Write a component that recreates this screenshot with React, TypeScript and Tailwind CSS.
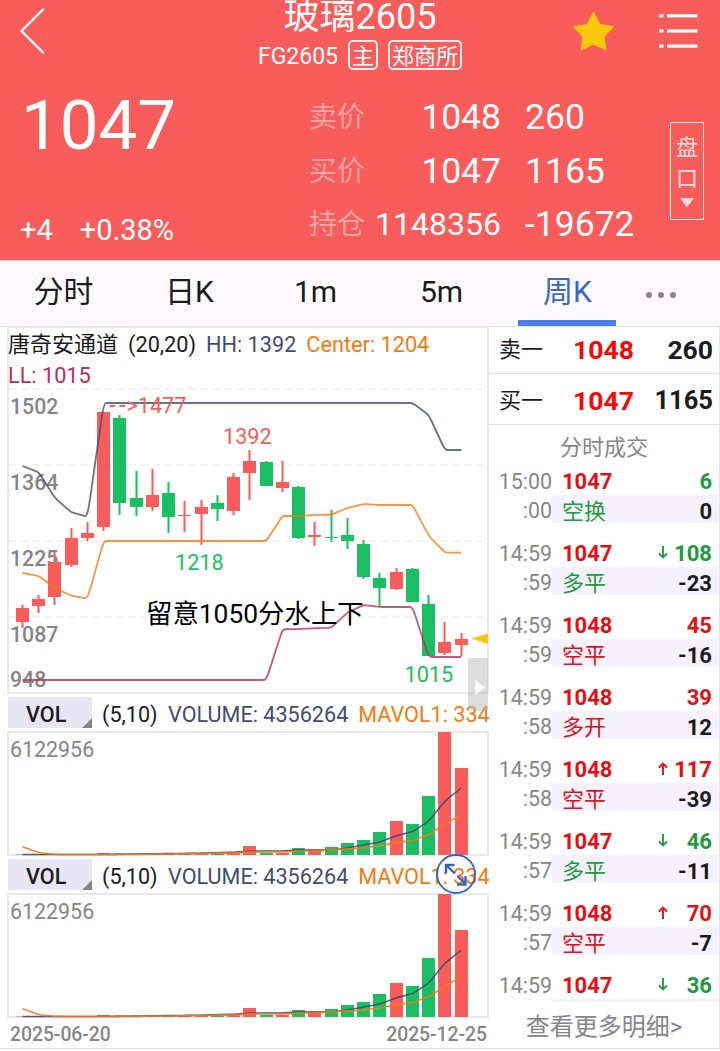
import React from 'react';

type Side = 'up' | 'down';

interface Candle {
  side: Side;
  open: number;
  close: number;
  high: number;
  low: number;
}

interface Trade {
  time: string;
  sec: string;
  price: number;
  arrow?: Side;
  volume: number;
  side: Side;
  kind: string;
  kindSide: Side;
  diff: string;
}

const RED = '#f85d5b';
const GREEN = '#1abf63';

const c = (side: Side, open: number, close: number, high: number, low: number): Candle => ({
  side,
  open,
  close,
  high,
  low,
});

const candles: Candle[] = [
  c('up', 608, 622, 605, 628),
  c('up', 599, 606, 595, 613),
  c('up', 562, 597, 551, 605),
  c('up', 538, 565, 528, 567),
  c('up', 533, 538, 522, 541),
  c('up', 412, 527, 412, 531),
  c('down', 418, 503, 415, 515),
  c('down', 498, 507, 471, 516),
  c('up', 495, 507, 469, 511),
  c('down', 493, 517, 482, 533),
  c('up', 515, 516, 501, 532),
  c('up', 507, 514, 500, 545),
  c('down', 503, 509, 495, 521),
  c('up', 477, 511, 473, 515),
  c('up', 461, 473, 450, 500),
  c('down', 462, 486, 461, 486),
  c('up', 482, 488, 461, 492),
  c('down', 487, 538, 486, 539),
  c('up', 535, 537, 522, 546),
  c('down', 537, 538, 510, 542),
  c('down', 535, 541, 518, 549),
  c('down', 544, 577, 540, 579),
  c('down', 578, 588, 573, 606),
  c('up', 572, 589, 568, 590),
  c('down', 569, 602, 568, 602),
  c('down', 604, 656, 595, 656),
  c('up', 642, 653, 622, 655),
  c('up', 639, 645, 633, 656),
];

const upper = [466, 472.3, 498, 512.3, 516.7, ...Array(20).fill(403), 415, 450, 450];
const center = [
  573, 576, 588, 595.7, 598.5, ...Array(11).fill(541), 516, 516, 515, 514.7, 508, 504, 505, 505, 505, 535.7, 552.7, 552.7,
];
const lower = [
  ...Array(16).fill(680), 629.3, 629, 628.3, 627.7, 612.7, 605, 607, 607, 607, 657, 657, 657,
];

const volumes = [
  0.5, 0.5, 0.5, 0.5, 0.5, 2, 1.5, 1, 1, 1.5, 1, 1.5, 1.5, 2, 9, 2, 2, 7, 5.5, 8, 12, 15, 23, 34, 31, 59, 123, 87,
];
const mavol1 = [
  0.5, 0.5, 0.5, 0.5, 0.5, 0.5, 0.7, 1, 1.2, 1.4, 1.6, 1.8, 2.4, 2.8, 4, 4, 4, 5, 5, 5, 7, 10, 13, 19.3, 23.3, 34, 54, 67,
];
const mavol2 = [
  8.3, 2.3, 0.7, 0.5, 0.5, 0.5, 0.5, 0.5, 1, 1, 1.3, 1.5, 1.8, 2, 3, 3, 3, 4, 4, 5, 6, 7, 9.3, 12.3, 14.3, 20.3, 31, 40,
];

const STEP = 16.25;
const cx = (i: number) => 22.5 + STEP * i;
const barLeft = (i: number) => Math.round(15.8 + STEP * i);

// Polyline with slightly rounded corners
function linePath(ys: number[]) {
  const r = 0.15;
  let d = `M${cx(0)} ${ys[0]}`;
  for (let i = 1; i < ys.length - 1; i++) {
    const ax = cx(i) - STEP * r;
    const ay = ys[i] + (ys[i - 1] - ys[i]) * r;
    const bx = cx(i) + STEP * r;
    const by = ys[i] + (ys[i + 1] - ys[i]) * r;
    d += `L${ax} ${ay}Q${cx(i)} ${ys[i]} ${bx} ${by}`;
  }
  return `${d}L${cx(ys.length - 1)} ${ys[ys.length - 1]}`;
}

const trades: Trade[] = [
  { time: '15:00', sec: ':00', price: 1047, volume: 6, side: 'down', kind: '空换', kindSide: 'down', diff: '0' },
  { time: '14:59', sec: ':59', price: 1047, arrow: 'down', volume: 108, side: 'down', kind: '多平', kindSide: 'down', diff: '-23' },
  { time: '14:59', sec: ':59', price: 1048, volume: 45, side: 'up', kind: '空平', kindSide: 'up', diff: '-16' },
  { time: '14:59', sec: ':58', price: 1048, volume: 39, side: 'up', kind: '多开', kindSide: 'up', diff: '12' },
  { time: '14:59', sec: ':58', price: 1048, arrow: 'up', volume: 117, side: 'up', kind: '空平', kindSide: 'up', diff: '-39' },
  { time: '14:59', sec: ':57', price: 1047, arrow: 'down', volume: 46, side: 'down', kind: '多平', kindSide: 'down', diff: '-11' },
  { time: '14:59', sec: ':57', price: 1048, arrow: 'up', volume: 70, side: 'up', kind: '空平', kindSide: 'up', diff: '-7' },
];

const quotes = [
  { label: '卖价', value: '1048', extra: '260', size: 'text-[35.5px]' },
  { label: '买价', value: '1047', extra: '1165', size: 'text-[35.5px]' },
  { label: '持仓', value: '1148356', extra: '-19672', size: 'text-[32px]' },
];

const tabs = ['分时', '日K', '1m', '5m', '周K'];

function Header() {
  return (
    <header className="h-[260px] bg-[#f85d5b] text-white">
      <div className="grid h-[74px] grid-cols-3">
        <svg className="ml-[18px] mt-[6px]" width="28" height="50" viewBox="0 0 28 50" fill="none">
          <path d="M25 3.5L3.5 25L25 46.5" stroke="#fff" strokeWidth="2.4" strokeLinecap="round" strokeLinejoin="round" />
        </svg>
        <div className="flex flex-col items-center">
          <h1 className="h-[40px] whitespace-nowrap text-[36px] leading-[34px]">玻璃2605</h1>
          <div className="flex h-[30px] items-center gap-[10px] whitespace-nowrap text-[23px] leading-[30px]">
            <span className="pt-[3px]">FG2605</span>
            <span className="flex h-[30px] items-center rounded-[5px] border-2 border-white/90 px-[2px] pt-[3px] text-[22px]">主</span>
            <span className="flex h-[30px] items-center rounded-[5px] border-2 border-white/90 px-[2px] pt-[3px] text-[22px]">郑商所</span>
          </div>
        </div>
        <div className="flex">
          <svg className="ml-[92px] mt-[10px]" width="44" height="42" viewBox="0 0 44 42">
            <path
              d="M21.5 3.2L27.6 15L40.6 17L31.6 26.2L33.4 39.2L21.5 33.6L9.6 39.2L11.4 26.2L2.4 17L15.4 15Z"
              fill="#fbc70b"
              stroke="#fbc70b"
              strokeWidth="2"
              strokeLinejoin="round"
            />
          </svg>
          <svg className="ml-[43px] mt-[13px]" width="40" height="38" viewBox="0 0 40 38" fill="#fff">
            {[1.2, 16.4, 31.5].map((y) => (
              <g key={y}>
                <rect x="0.2" y={y} width="4.3" height="3.2" />
                <rect x="8" y={y} width="30.5" height="3.2" />
              </g>
            ))}
          </svg>
        </div>
      </div>

      <div className="flex h-[186px]">
        <div className="w-[309px] pl-[21px] pt-4">
          <div className="text-[69px] leading-[72px]">1047</div>
          <div className="-ml-px mt-[50px] flex gap-[27px] text-[29px] leading-9">
            <span>+4</span>
            <span>+0.38%</span>
          </div>
        </div>
        <div className="flex w-[361px] flex-col pt-[17px]">
          {quotes.map((q) => (
            <div key={q.label} className="grid h-[53.7px] grid-cols-[65px_127px_auto] items-center leading-[53.7px]">
              <span className="text-[28px] text-white/45">{q.label}</span>
              <span className={`justify-self-end ${q.size}`}>{q.value}</span>
              <span className="pl-6 text-[35.5px]">{q.extra}</span>
            </div>
          ))}
        </div>
        <button className="mt-12 flex h-[98px] w-[34px] flex-col items-center border border-white/90 pt-[9px] text-[22px] leading-[31px] text-white/80">
          <span>盘</span>
          <span>口</span>
          <svg className="mt-1" width="14" height="10" viewBox="0 0 14 10">
            <path d="M0 0H14L7 9.5Z" fill="#fff" fillOpacity="0.75" />
          </svg>
        </button>
      </div>
    </header>
  );
}

function Tabs() {
  return (
    <nav className="flex h-[67px] border-b border-t border-b-[#dfe1e8] border-t-[#fdccd0] bg-[#fffaff] text-[30px] text-[#1b1b1b]">
      {tabs.map((tab) => (
        <button
          key={tab}
          className={`relative flex w-[126px] justify-center pl-px pt-[9px] leading-[44px] ${tab === '周K' ? 'text-[#3a66c4]' : ''}`}
        >
          {tab}
          {tab === '周K' && <span className="absolute bottom-0 left-[14px] h-[6px] w-[98px] bg-[#4a7de6]" />}
        </button>
      ))}
      <div className="flex gap-[6px] pl-4 pt-[31px]">
        <i className="size-[6px] rounded-full bg-[#85858a]" />
        <i className="size-[6px] rounded-full bg-[#85858a]" />
        <i className="size-[6px] rounded-full bg-[#85858a]" />
      </div>
    </nav>
  );
}

function PriceChart() {
  const axis = [
    { label: '1502', y: 414 },
    { label: '1364', y: 490 },
    { label: '1225', y: 566 },
    { label: '1087', y: 642 },
    { label: '948', y: 687 },
  ];

  return (
    <svg width="478" height="305" viewBox="9 387 478 305" className="block overflow-visible">
      {[389, 465, 541, 617].map((y) => (
        <line key={y} x1="9" x2="483" y1={y} y2={y} stroke="#f3f3f5" strokeWidth="2" strokeDasharray="7 5" />
      ))}
      <g fontSize="21.3" fontWeight="500" fill="#858585">
        {axis.map((a) => (
          <text key={a.label} x="10" y={a.y}>
            {a.label}
          </text>
        ))}
      </g>
      {candles.map((k, i) => {
        const left = barLeft(i);
        const color = k.side === 'up' ? RED : GREEN;
        return (
          <g key={i} fill={color}>
            <rect x={left + 5.5} y={k.high} width="2" height={k.low - k.high} />
            <rect x={left} y={k.open} width="13" height={k.close - k.open} />
          </g>
        );
      })}
      <g fill="none" strokeWidth="1.8" strokeOpacity="0.8">
        <path d={linePath(upper)} stroke="#434d6b" />
        <path d={linePath(center)} stroke="#f57a12" />
        <path d={linePath(lower)} stroke="#b83058" />
      </g>
      <line x1="109.5" x2="125" y1="406" y2="406" stroke={RED} strokeWidth="1.8" strokeDasharray="5.7 4.3" />
      <g fontSize="21.6">
        <text x="126.5" y="413" fill={RED}>&gt;1477</text>
        <text x="223" y="444" fill={RED}>1392</text>
        <text x="175" y="570" fill={GREEN}>1218</text>
        <text x="404.5" y="682" fill={GREEN}>1015</text>
      </g>
      <text x="146" y="623" fontSize="26.4" fill="#000">留意1050分水上下</text>
      <path d="M471 638.5L488 633.5V644Z" fill="#fac80f" />
    </svg>
  );
}

function VolumePanel() {
  return (
    <div>
      <div className="flex h-[37px] items-start overflow-hidden whitespace-nowrap pl-px pt-[3px] text-[21.6px] leading-[35px]">
        <div className="relative h-[31px] w-[84px] shrink-0 bg-[#e8e6f5] pl-[18px] font-medium text-[#1b1b1b]">
          VOL
          <svg className="absolute bottom-0 right-0" width="10" height="10" viewBox="0 0 10 10">
            <path d="M10 0V10H0Z" fill="#858585" />
          </svg>
        </div>
        <span className="ml-[10px] text-[#1b1b1b]">(5,10)</span>
        <span className="ml-[10.5px] text-[#434d6b]">VOLUME: 4356264</span>
        <span className="ml-[10px] text-[#f57a12]">MAVOL1: 334</span>
      </div>
      <div className="h-[125px] border-2 border-[#e6e8eb]">
        <svg width="478" height="121" viewBox="9 2 478 121" className="block overflow-visible">
          {volumes.map((v, i) => (
            <rect
              key={i}
              x={barLeft(i)}
              y={124 - v}
              width="13"
              height={v}
              fill={candles[i].side === 'up' ? RED : GREEN}
            />
          ))}
          <g fill="none" strokeWidth="1.6">
            <path d={linePath(mavol1.map((v) => 124 - v))} stroke="#434d6b" strokeOpacity="0.9" />
            <path d={linePath(mavol2.map((v) => 124 - v))} stroke="#f57a12" strokeOpacity="0.9" />
          </g>
          <text x="10" y="26" fontSize="21.4" fill="#858585">6122956</text>
        </svg>
      </div>
    </div>
  );
}

function TradeArrow({ dir }: { dir: Side }) {
  return (
    <svg width="10" height="13" viewBox="0 0 10 13" fill="none" stroke="currentColor" strokeWidth="1.9">
      <path d={dir === 'down' ? 'M5 0V12M1 7.5L5 11.5L9 7.5' : 'M5 13V1M1 5.5L5 1.5L9 5.5'} />
    </svg>
  );
}

function TradeLine({ time, price, arrow, volume, side }: Pick<Trade, 'time' | 'price' | 'arrow' | 'volume' | 'side'>) {
  return (
    <div className="flex h-[27px] shrink-0 leading-[27px]">
      <span className="w-[63px] text-right text-[21.4px] text-[#85858a]">{time}</span>
      <span className="ml-[10px] w-[92px] font-bold text-[#e60f14]">{price}</span>
      <span
        className={`flex flex-1 justify-between pr-[7px] font-bold ${side === 'up' ? 'text-[#e60f14]' : 'text-[#1f9a3d]'}`}
      >
        <span className="pl-[4px] pt-[6px]">{arrow && <TradeArrow dir={arrow} />}</span>
        {volume}
      </span>
    </div>
  );
}

function OrderPanel() {
  return (
    <aside className="flex h-[721px] w-[231px] flex-col border-r border-[#e3e4ea] bg-white text-[22px]">
      {[
        { label: '卖一', price: 1048, qty: 260, size: 'text-[26.5px]', pad: 'pt-0' },
        { label: '买一', price: 1047, qty: 1165, size: 'text-[25.5px]', pad: 'pt-[4px]' },
      ].map((o) => (
        <div
          key={o.label}
          className={`flex h-[51px] shrink-0 items-center border-b border-[#dfe1e8] pl-[10px] pr-[6px] leading-none text-[#1b1b1b] first:h-[47px] ${o.pad}`}
        >
          <span>{o.label}</span>
          <span className="ml-[30px] text-[26.5px] font-bold text-[#fa0505]">{o.price}</span>
          <span className={`ml-auto font-bold ${o.size}`}>{o.qty}</span>
        </div>
      ))}
      <div className="h-[43px] shrink-0 text-center leading-[46px] text-[#85858a]">分时成交</div>
      {trades.map((t, i) => (
        <div key={i} className="h-[72px] shrink-0">
          <TradeLine {...t} />
          <div className="flex h-7">
            <span className="w-[63px] text-right text-[21.4px] leading-[31px] text-[#85858a]">{t.sec}</span>
            <span className="flex flex-1 justify-between bg-[#f5f2fe] pl-[10px] pr-[7px] leading-[34px]">
              <span className={t.kindSide === 'up' ? 'text-[#e60f14]' : 'text-[#1f9a3d]'}>{t.kind}</span>
              <span className="font-bold text-[#1b1b1b]">{t.diff}</span>
            </span>
          </div>
        </div>
      ))}
      <TradeLine time="14:59" price={1047} arrow="down" volume={36} side="down" />
      <div className="ml-[63px] h-[3px] shrink-0 bg-[#f5f2fe]" />
      <div className="text-center text-[24px] leading-[50px] text-[#85858a]">查看更多明细&gt;</div>
    </aside>
  );
}

export default function App() {
  return (
    <div className="h-[1051px] w-[720px] overflow-hidden bg-white font-['Roboto','Noto_Sans_CJK_SC',sans-serif]">
      <Header />
      <Tabs />
      <main className="flex h-[722px] border-b border-[#dfe1e8]">
        <section className="relative w-[489px] shrink-0 pl-[7px]">
          <div className="h-[367px] border-2 border-t border-[#e6e8eb]">
            <div className="-ml-px h-[59px] pt-px text-[21.7px] leading-[31px]">
              <div className="flex gap-[10px] whitespace-nowrap">
                <span className="text-[22px] text-[#1b1b1b]">唐奇安通道</span>
                <span className="text-[#1b1b1b]">(20,20)</span>
                <span className="text-[#434d6b]">HH: 1392</span>
                <span className="text-[#f57a12]">Center: 1204</span>
              </div>
              <div className="text-[#b83058]">LL: 1015</div>
            </div>
            <PriceChart />
          </div>
          <VolumePanel />
          <VolumePanel />
          <div className="flex justify-between pl-[3px] pr-[2px] text-[19.3px] font-medium leading-[33px] text-[#858585]">
            <span>2025-06-20</span>
            <span>2025-12-25</span>
          </div>

          {/* Drawer handle */}
          <div className="absolute right-px top-[331px] h-[53px] w-[20px] bg-[#b4b4b4]/45">
            <svg className="ml-[7px] mt-[22px]" width="10" height="15" viewBox="0 0 10 15">
              <path d="M0 0L10 7.5L0 15Z" fill="#fff" />
            </svg>
          </div>

          {/* Expand button */}
          <svg className="absolute left-[436px] top-[527px]" width="40" height="40" viewBox="0 0 40 40" fill="none" stroke="#3463c1">
            <circle cx="20" cy="20" r="19" strokeWidth="1.8" />
            <path d="M10 19.5V11H18.5M10.5 11.5L19 19.5M21.5 22L29.5 30M29.5 22V30.5H21" strokeWidth="2.4" />
          </svg>
        </section>
        <OrderPanel />
      </main>
    </div>
  );
}
